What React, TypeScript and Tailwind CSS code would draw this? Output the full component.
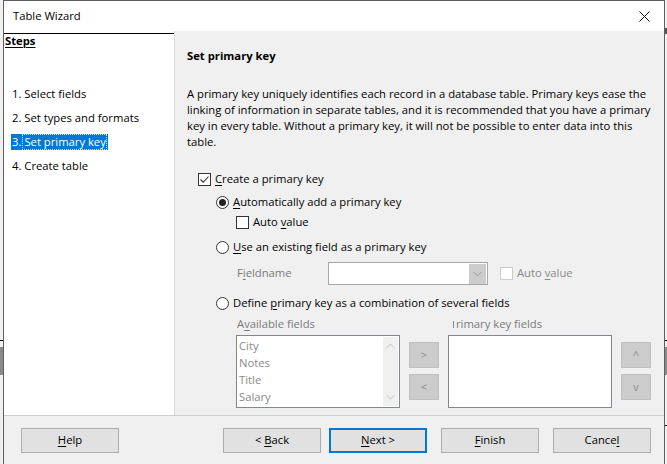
import React from "react";

const F = { fontFamily: '"Segoe UI", "Open Sans", "Noto Sans", sans-serif' };

function U({ children }: { children: React.ReactNode }) {
  return <span className="underline decoration-1 underline-offset-[2px]">{children}</span>;
}

function CheckBox({ checked, disabled }: { checked?: boolean; disabled?: boolean }) {
  return (
    <span
      className={`flex h-[13px] w-[13px] shrink-0 items-center justify-center border bg-white ${
        disabled ? "border-[#cccccc]" : "border-[#333333]"
      }`}
    >
      {checked && (
        <svg width="11" height="11" viewBox="0 0 11 11">
          <path d="M1.5 5.5 L4.2 8.2 L9.5 2.5" fill="none" stroke="#333" strokeWidth="1.1" />
        </svg>
      )}
    </span>
  );
}

function Radio({ checked }: { checked?: boolean }) {
  return (
    <span className="flex h-[13px] w-[13px] shrink-0 items-center justify-center rounded-full border border-[#333333] bg-white">
      {checked && <span className="h-[7px] w-[7px] rounded-full bg-[#222]" />}
    </span>
  );
}

function SmallBtn({ label }: { label: string }) {
  return (
    <div className="flex h-[26px] w-[30px] items-center justify-center border border-[#bfbfbf] bg-[#cccccc] text-[11px] text-[#8d8a8c]">
      {label}
    </div>
  );
}

function Btn({ children, primary }: { children: React.ReactNode; primary?: boolean }) {
  return (
    <div
      className={`flex h-[25px] w-[98px] items-center justify-center bg-[#e1e1e1] text-black ${
        primary ? "border-2 border-[#0078d7]" : "border border-[#adadad]"
      }`}
    >
      <span>{children}</span>
    </div>
  );
}

export default function App() {
  return (
    <div className="relative h-[464px] w-[667px] overflow-hidden bg-[#f0f0f0] text-[11.25px] text-black" style={F}>
      {/* background bits outside the dialog */}
      <div className="absolute left-0 top-[340px] h-[1px] w-[3px] bg-black" />
      <div className="absolute left-0 top-[347px] h-[28px] w-[3px] bg-[#8a8a8a]" />
      <div className="absolute right-0 top-[340px] h-[1px] w-[2px] bg-black" />
      <div className="absolute right-0 top-[347px] h-[28px] w-[2px] bg-[#8a8a8a]" />
      <div className="absolute right-0 top-[425px] h-[1px] w-[2px] bg-black" />
      <div className="absolute right-0 top-[28px] h-[6px] w-[2px] bg-[#555]" />

      <div className="ml-[3px] flex h-full w-[662px] flex-col border-x border-t border-[#5f5f5f]">
        {/* title bar */}
        <div className="flex h-[30px] shrink-0 items-center justify-between bg-white pl-[9px] pr-[14px]">
          <span>Table Wizard</span>
          <svg width="11" height="11" viewBox="0 0 11 11">
            <path d="M0.5 0.5 L10.5 10.5 M10.5 0.5 L0.5 10.5" stroke="#111" strokeWidth="1" />
          </svg>
        </div>

        {/* main */}
        <div className="flex h-[384px] shrink-0">
          {/* steps */}
          <div className="flex w-[171px] shrink-0 flex-col border-r border-[#d8d8d8] bg-white">
            <div className="mt-[2px] h-[1px] w-full bg-black" />
            <div className="pl-[1px] font-bold leading-[14px]">
              <span className="underline decoration-1 underline-offset-[2px]">Steps</span>
            </div>
            <div className="mt-[38px] flex flex-col gap-[8px] pl-[7px] leading-[16px]">
              <div className="pl-[1px]">1. Select fields</div>
              <div className="pl-[1px]">2. Set types and formats</div>
              <div className="flex w-fit bg-[#0078d7] pl-[1px] pr-[1px] text-white">
                <span>3.</span>
                <span className="ml-[1px] border border-dotted border-[#cfe4f7] pl-[1px] leading-[14px]">Set primary key</span>
              </div>
              <div className="pl-[1px]">4. Create table</div>
            </div>
          </div>

          {/* content */}
          <div className="flex flex-1 flex-col bg-[#f0f0f0] pl-[12px]">
            <div className="mt-[17px] font-bold leading-[16px]">Set primary key</div>
            <div className="mt-[22px] whitespace-nowrap leading-[16px]">
              <div>A primary key uniquely identifies each record in a database table. Primary keys ease the</div>
              <div>linking of information in separate tables, and it is recommended that you have a primary</div>
              <div>key in every table. Without a primary key, it will not be possible to enter data into this</div>
              <div>table.</div>
            </div>

            <div className="ml-[11px] mt-[21px] flex h-[16px] items-center">
              <CheckBox checked />
              <span className="ml-[4px]">
                <U>C</U>reate a primary key
              </span>
            </div>

            <div className="ml-[29px] mt-[7px] flex h-[16px] items-center">
              <Radio checked />
              <span className="ml-[4px]">
                <U>A</U>utomatically add a primary key
              </span>
            </div>

            <div className="ml-[49px] mt-[4px] flex h-[16px] items-center">
              <CheckBox />
              <span className="ml-[4px]">
                Auto <U>v</U>alue
              </span>
            </div>

            <div className="ml-[29px] mt-[9px] flex h-[16px] items-center">
              <Radio />
              <span className="ml-[4px]">
                <U>U</U>se an existing field as a primary key
              </span>
            </div>

            <div className="ml-[50px] mt-[7px] flex h-[23px] items-center">
              <span className="w-[91px] text-[#7a7a7a]">
                F<U>i</U>eldname
              </span>
              <div className="flex h-[23px] w-[160px] items-center justify-end border border-[#a8a8a8] bg-white pr-[1px]">
                <div className="flex h-[20px] w-[17px] items-center justify-center bg-[#cccccc]">
                  <svg width="9" height="6" viewBox="0 0 9 6">
                    <path d="M0.5 0.8 L4.5 4.8 L8.5 0.8" fill="none" stroke="#9a9a9a" strokeWidth="1" />
                  </svg>
                </div>
              </div>
              <div className="ml-[12px]">
                <CheckBox disabled />
              </div>
              <span className="ml-[4px] text-[#8a8a8a]">
                Auto <U>v</U>alue
              </span>
            </div>

            <div className="ml-[29px] mt-[10px] flex h-[16px] items-center">
              <Radio />
              <span className="ml-[4px]">
                Define <U>p</U>rimary key as a combination of several fields
              </span>
            </div>

            <div className="ml-[50px] mt-[5px] flex h-[16px] items-center text-[#7a7a7a]">
              <span className="w-[216px]">
                A<U>v</U>ailable fields
              </span>
              <span className="flex items-center">
                <span className="mr-[2px] h-[7px] w-[1px] bg-[#8a8a8a]" />
                <span>rimary key fields</span>
              </span>
            </div>

            <div className="ml-[49px] mt-[3px] flex">
              <div className="flex h-[73px] w-[164px] border border-[#828790] bg-white">
                <div className="flex flex-1 flex-col pl-[2px] pt-[1px] leading-[17px] text-[#8a8a8a]">
                  <div>City</div>
                  <div>Notes</div>
                  <div>Title</div>
                  <div>Salary</div>
                </div>
                <div className="m-[1px] flex w-[15px] flex-col items-center justify-between bg-[#f0f0f0] py-[6px]">
                  <svg width="9" height="6" viewBox="0 0 9 6">
                    <path d="M0.5 5 L4.5 1 L8.5 5" fill="none" stroke="#c2c2c2" strokeWidth="1" />
                  </svg>
                  <svg width="9" height="6" viewBox="0 0 9 6">
                    <path d="M0.5 1 L4.5 5 L8.5 1" fill="none" stroke="#c2c2c2" strokeWidth="1" />
                  </svg>
                </div>
              </div>
              <div className="ml-[9px] mt-[7px] flex flex-col gap-[6px]">
                <SmallBtn label=">" />
                <SmallBtn label="<" />
              </div>
              <div className="ml-[9px] h-[73px] w-[164px] border border-[#828790] bg-white" />
              <div className="ml-[9px] mt-[7px] flex flex-col gap-[6px]">
                <SmallBtn label="^" />
                <SmallBtn label="v" />
              </div>
            </div>
          </div>
        </div>

        {/* footer */}
        <div className="flex flex-1 items-start border-t border-[#d0d0d0] bg-[#f0f0f0] pt-[12px]">
          <div className="ml-[17px]">
            <Btn>
              <U>H</U>elp
            </Btn>
          </div>
          <div className="ml-[104px]">
            <Btn>
              &lt; <U>B</U>ack
            </Btn>
          </div>
          <div className="ml-[8px]">
            <Btn primary>
              <U>N</U>ext &gt;
            </Btn>
          </div>
          <div className="ml-[14px]">
            <Btn>
              <U>F</U>inish
            </Btn>
          </div>
          <div className="ml-[14px]">
            <Btn>
              Cance<U>l</U>
            </Btn>
          </div>
        </div>
      </div>
    </div>
  );
}
